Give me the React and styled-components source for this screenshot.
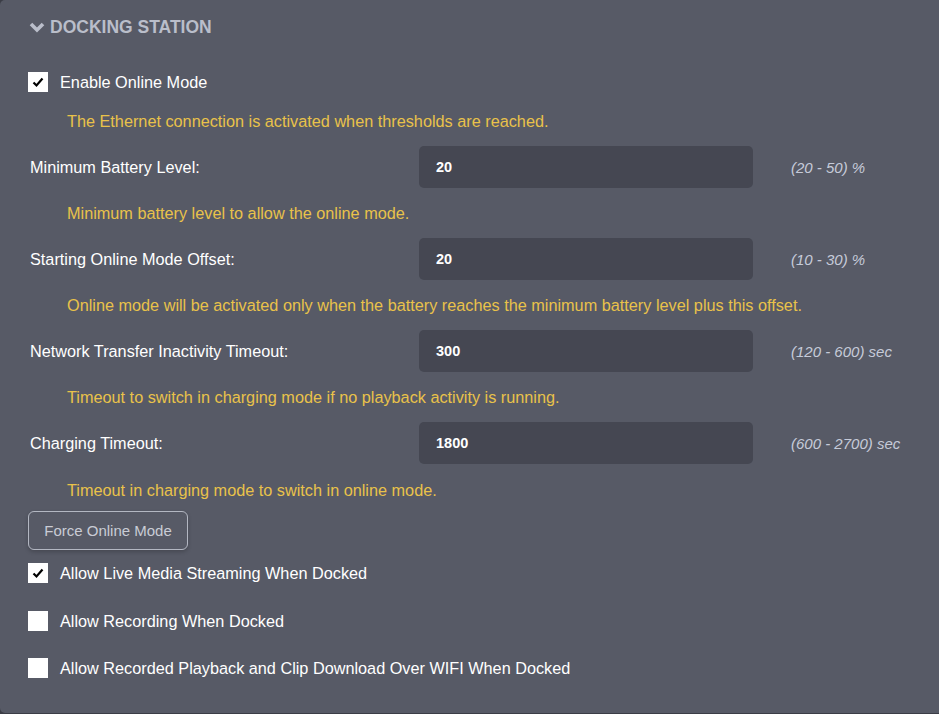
import React from 'react';
import styled, { createGlobalStyle } from 'styled-components';

const GlobalStyle = createGlobalStyle`
  html, body {
    margin: 0;
    padding: 0;
    background: #3b3d46;
    font-family: 'Liberation Sans', Arial, sans-serif;
  }
`;

const Panel = styled.section`
  box-sizing: border-box;
  width: 945px;
  height: 713px;
  background: #575a66;
  border-radius: 5px;
  padding: 14px 0 0 28px;
  display: flex;
  flex-direction: column;
  align-items: flex-start;
`;

const Header = styled.h2`
  margin: 0;
  height: 26px;
  display: flex;
  align-items: center;
  gap: 5px;
  font-size: 17.5px;
  font-weight: 700;
  text-transform: uppercase;
  color: #babeca;

  svg {
    width: 16px;
    height: 12px;
    margin-left: 1px;
  }
`;

const CheckRow = styled.label`
  display: flex;
  align-items: center;
  gap: 12px;
  height: 20px;
  margin-top: ${(p) => p.$mt}px;
  font-size: 16.25px;
  color: #ffffff;
`;

const Box = styled.span`
  width: 20px;
  height: 20px;
  background: #ffffff;
  display: flex;
  align-items: center;
  justify-content: center;

  svg {
    width: 12px;
    height: 12px;
  }
`;

const Help = styled.p`
  margin: ${(p) => p.$mt}px 0 0;
  padding-left: 39px;
  height: 20px;
  line-height: 20px;
  font-size: 16.25px;
  color: #e9c24a;
`;

const FieldRow = styled.div`
  display: grid;
  grid-template-columns: 389px 334px auto;
  align-items: center;
  height: 42px;
  margin-top: 15px;
  padding-left: 2px;
`;

const FieldLabel = styled.span`
  font-size: 16.25px;
  color: #ffffff;
`;

const Input = styled.div`
  box-sizing: border-box;
  height: 42px;
  background: #454752;
  border-radius: 5px;
  padding-left: 17px;
  display: flex;
  align-items: center;
  font-size: 14.5px;
  font-weight: 700;
  color: #ffffff;
`;

const Range = styled.span`
  margin-left: 38px;
  font-size: 15px;
  font-style: italic;
  color: #c6cbd9;
`;

const Button = styled.button`
  box-sizing: border-box;
  margin-top: 11px;
  height: 39px;
  width: 160px;
  padding: 0;
  background: transparent;
  border: 1px solid #b3b7c2;
  border-radius: 6px;
  box-shadow: 0 2px 4px rgba(0, 0, 0, 0.2);
  font-family: 'Liberation Sans', Arial, sans-serif;
  font-size: 15px;
  color: #c9ccd5;
  cursor: pointer;
`;

const Chevron = () => (
  <svg viewBox="0 0 16 12">
    <path d="M2 3 L8 9 L14 3" fill="none" stroke="currentColor" strokeWidth="3.6" strokeLinejoin="miter" />
  </svg>
);

const Check = () => (
  <svg viewBox="0 0 12 12">
    <path d="M1.5 6.5 L4.5 9.5 L10.5 2.5" fill="none" stroke="#000" strokeWidth="2.2" />
  </svg>
);

const CheckBox = ({ checked, label, mt }) => (
  <CheckRow $mt={mt}>
    <Box>{checked && <Check />}</Box>
    {label}
  </CheckRow>
);

const fields = [
  {
    label: 'Minimum Battery Level:',
    value: '20',
    range: '(20 - 50) %',
    help: 'Minimum battery level to allow the online mode.',
  },
  {
    label: 'Starting Online Mode Offset:',
    value: '20',
    range: '(10 - 30) %',
    help: 'Online mode will be activated only when the battery reaches the minimum battery level plus this offset.',
  },
  {
    label: 'Network Transfer Inactivity Timeout:',
    value: '300',
    range: '(120 - 600) sec',
    help: 'Timeout to switch in charging mode if no playback activity is running.',
  },
  {
    label: 'Charging Timeout:',
    value: '1800',
    range: '(600 - 2700) sec',
    help: 'Timeout in charging mode to switch in online mode.',
  },
];

export default function App() {
  return (
    <>
      <GlobalStyle />
      <Panel>
        <Header>
          <Chevron />
          Docking Station
        </Header>
        <CheckBox checked label="Enable Online Mode" mt={32} />
        <Help $mt={19}>The Ethernet connection is activated when thresholds are reached.</Help>
        {fields.map((f, i) => (
          <React.Fragment key={f.label}>
            <FieldRow>
              <FieldLabel>{f.label}</FieldLabel>
              <Input>{f.value}</Input>
              <Range>{f.range}</Range>
            </FieldRow>
            <Help $mt={i === fields.length - 1 ? 16 : 15}>{f.help}</Help>
          </React.Fragment>
        ))}
        <Button>Force Online Mode</Button>
        <CheckBox checked label="Allow Live Media Streaming When Docked" mt={13} />
        <CheckBox label="Allow Recording When Docked" mt={28} />
        <CheckBox label="Allow Recorded Playback and Clip Download Over WIFI When Docked" mt={27} />
      </Panel>
    </>
  );
}
